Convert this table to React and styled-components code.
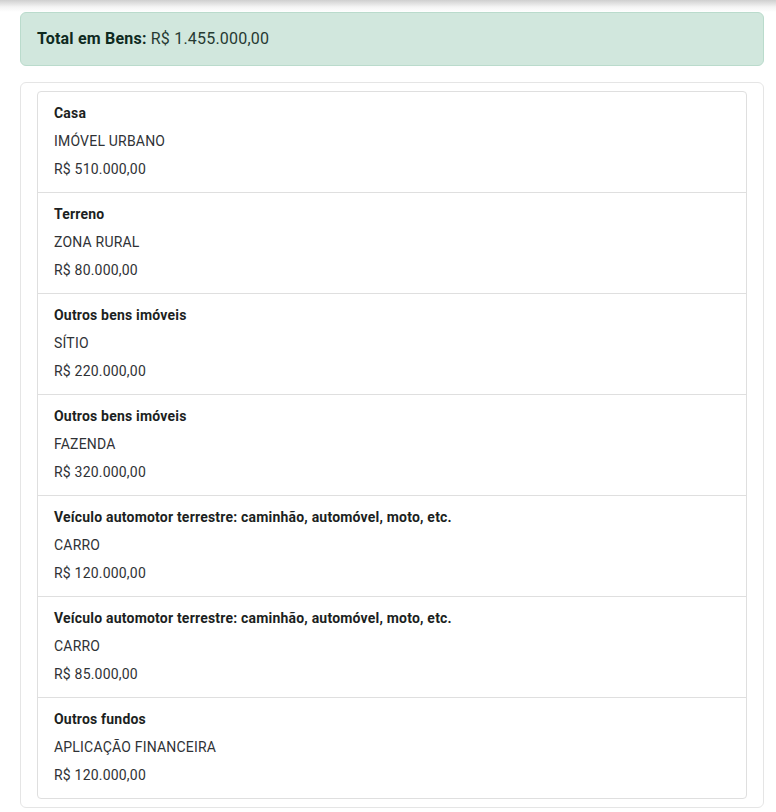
import React from "react";
import styled, { createGlobalStyle } from "styled-components";

// global
const GlobalStyle = createGlobalStyle`
	body {
		margin: 0;
		background: #fff;
		font-family: Roboto, "Liberation Sans", Arial, sans-serif;
		color: #212529;
	}
`;

const bens = [
	{ tipo: "Casa", descricao: "IMÓVEL URBANO", valor: "R$ 510.000,00" },
	{ tipo: "Terreno", descricao: "ZONA RURAL", valor: "R$ 80.000,00" },
	{ tipo: "Outros bens imóveis", descricao: "SÍTIO", valor: "R$ 220.000,00" },
	{ tipo: "Outros bens imóveis", descricao: "FAZENDA", valor: "R$ 320.000,00" },
	{
		tipo: "Veículo automotor terrestre: caminhão, automóvel, moto, etc.",
		descricao: "CARRO",
		valor: "R$ 120.000,00"
	},
	{
		tipo: "Veículo automotor terrestre: caminhão, automóvel, moto, etc.",
		descricao: "CARRO",
		valor: "R$ 85.000,00"
	},
	{ tipo: "Outros fundos", descricao: "APLICAÇÃO FINANCEIRA", valor: "R$ 120.000,00" }
];

const App = () => {
	return (
		<>
			<GlobalStyle />
			<Page>
				<Alert>
					<strong>Total em Bens:</strong> R$ 1.455.000,00
				</Alert>

				<Card>
					<List>
						{bens.map((bem, i) => (
							<Item key={i}>
								<Title>{bem.tipo}</Title>
								<Line>{bem.descricao}</Line>
								<Line>{bem.valor}</Line>
							</Item>
						))}
					</List>
				</Card>
			</Page>
		</>
	);
};

const Page = styled.div`
	min-height: 812px;
	box-sizing: border-box;
	padding: 12px 12px 6px 20px;
	display: flex;
	flex-direction: column;
	gap: 16px;
	background: linear-gradient(#cfcfcf, #f4f4f4 7px, #fff 12px) no-repeat;
	background-size: 100% 12px;
`;

const Alert = styled.div`
	padding: 15px 16px;
	line-height: 22px;
	font-size: 16px;
	letter-spacing: 0.2px;
	color: #263a32;
	background: #d1e7dd;
	border: 1px solid #badbcc;
	border-radius: 6px;
	strong {
		font-weight: 700;
		color: #0e2a1f;
	}
`;

const Card = styled.div`
	padding: 8px 16px;
	border: 1px solid #e5e5e5;
	border-radius: 6px;
	background: #fff;
`;

const List = styled.ul`
	margin: 0;
	padding: 0;
	list-style: none;
	border: 1px solid #dfdfdf;
	border-radius: 4px;
`;

const Item = styled.li`
	padding: 11px 16px 13px;
	display: flex;
	flex-direction: column;
	gap: 8px;
	font-size: 14px;
	line-height: 20px;
	letter-spacing: 0.2px;
	& + & {
		border-top: 1px solid #dfdfdf;
	}
`;

const Title = styled.span`
	font-weight: 700;
	color: #1c1f22;
`;

const Line = styled.span`
	color: #2f3236;
`;

export default App;
